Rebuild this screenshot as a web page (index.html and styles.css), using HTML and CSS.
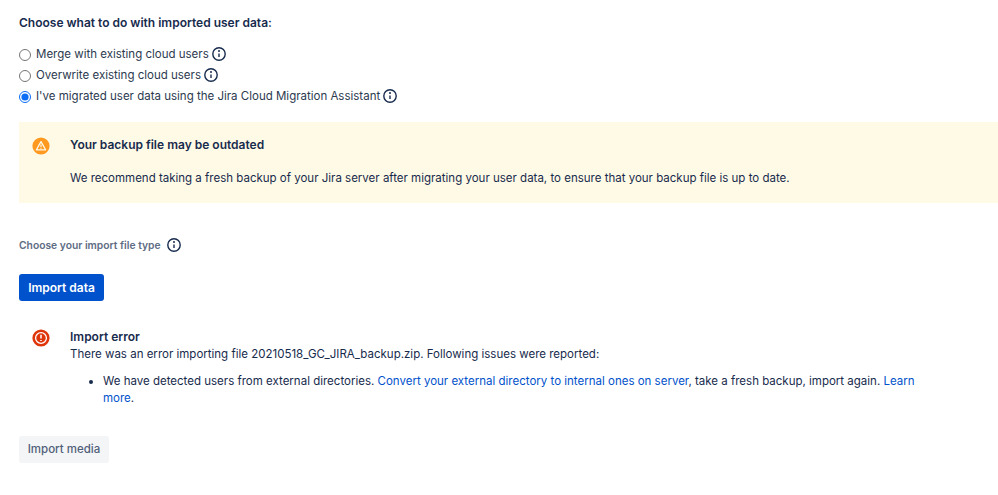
FILE: index.html
```html
<!DOCTYPE html>
<html lang="en">
<head>
<meta charset="utf-8">
<title>Import</title>
<link rel="stylesheet" href="styles.css">
</head>
<body>
<main class="page">
  <h2 class="heading">Choose what to do with imported user data:</h2>
  <div class="options">
    <label class="option"><input type="radio" name="mode"><span>Merge with existing cloud users</span>
      <svg class="info" viewBox="0 0 16 16"><circle cx="8" cy="8" r="6.2"/><path d="M8 7.4v3.6"/><circle class="dot" cx="8" cy="5" r="1"/></svg></label>
    <label class="option"><input type="radio" name="mode"><span>Overwrite existing cloud users</span>
      <svg class="info" viewBox="0 0 16 16"><circle cx="8" cy="8" r="6.2"/><path d="M8 7.4v3.6"/><circle class="dot" cx="8" cy="5" r="1"/></svg></label>
    <label class="option"><input type="radio" name="mode" checked><span>I've migrated user data using the Jira Cloud Migration Assistant</span>
      <svg class="info" viewBox="0 0 16 16"><circle cx="8" cy="8" r="6.2"/><path d="M8 7.4v3.6"/><circle class="dot" cx="8" cy="5" r="1"/></svg></label>
  </div>
  <section class="notice">
    <svg class="status" viewBox="0 0 18 18"><circle cx="9" cy="9" r="8.6" fill="#ff991f"/><path d="M9 4.6 13.6 12.8H4.4Z" fill="none" stroke="#fffaeb" stroke-width="1.3" stroke-linejoin="round"/><path d="M9 7.6v2.6M9 11v.7" stroke="#fffaeb" stroke-width="1.2"/></svg>
    <div>
      <h3 class="title">Your backup file may be outdated</h3>
      <p class="notice-text">We recommend taking a fresh backup of your Jira server after migrating your user data, to ensure that your backup file is up to date.</p>
    </div>
  </section>
  <div class="file-type"><span>Choose your import file type</span>
    <svg class="info" viewBox="0 0 16 16"><circle cx="8" cy="8" r="6.2"/><path d="M8 7.4v3.6"/><circle class="dot" cx="8" cy="5" r="1"/></svg></div>
  <button class="btn primary" type="button">Import data</button>
  <section class="error">
    <svg class="status" viewBox="0 0 18 18"><circle cx="9" cy="9" r="8.6" fill="#de350b"/><circle cx="9" cy="9" r="5.4" fill="none" stroke="#fff" stroke-width="1.3"/><path d="M9 5.8v3.8M9 10.9v1" stroke="#fff" stroke-width="1.5"/></svg>
    <div class="error-body">
      <h3 class="title">Import error</h3>
      <p class="error-text">There was an error importing file 20210518_GC_JIRA_backup.zip. Following issues were reported:</p>
      <ul class="issues">
        <li>We have detected users from external directories. <a href="#">Convert your external directory to internal ones on server</a>, take a fresh backup, import again. <a href="#">Learn more</a>.</li>
      </ul>
    </div>
  </section>
  <button class="btn subtle" type="button">Import media</button>
</main>
</body>
</html>
```
FILE: styles.css
```css
* { box-sizing: border-box; }
html, body { margin: 0; background: #fff; }
body {
  font-family: Inter, "Liberation Sans", sans-serif;
  font-size: 11.5px;
  line-height: 17px;
  color: #172b4d;
  overflow: hidden;
}
.page { width: 998px; height: 495px; padding: 14px 0 0 19px; }
.heading { margin: 0; font-size: 12px; line-height: 17px; font-weight: 600; color: #172b4d; }
.options { margin-top: 15px; display: flex; flex-direction: column; gap: 4px; }
.option { display: flex; align-items: center; height: 17px; color: #2c3a4f; }
.option input { width: 12px; height: 12px; margin: 0 5px 0 0; accent-color: #0b6ef5; }
.info { width: 16px; height: 16px; margin: -2px 0 0 2px; flex: none; fill: none; stroke: #172b4d; stroke-width: 1.4; }
.info .dot { fill: #172b4d; stroke: none; }
.notice {
  display: flex;
  gap: 13px;
  margin-top: 17px;
  height: 81px;
  padding: 14px 0 0 13px;
  background: #fffae6;
}
.status { width: 18px; height: 18px; margin-top: 1px; flex: none; }
.notice > div { padding-left: 7px; }
.title { margin: 0; font-size: 12px; line-height: 17px; font-weight: 600; color: #172b4d; }
.notice-text { margin: 17px 0 0; }
.file-type { display: flex; align-items: center; gap: 3px; margin-top: 34px; font-size: 10.3px; font-weight: 600; color: #5e6c84; height: 17px; }
.file-type .info { margin-left: 2px; }
.btn { display: block; border: 0; border-radius: 3px; font: inherit; font-weight: 500; }
.primary { margin-top: 20px; width: 85px; height: 27px; background: #0052cc; color: #fff; font-size: 12px; font-weight: 600; }
.error { display: flex; gap: 13px; margin-top: 27px; padding-left: 13px; }
.error-body { padding-left: 7px; width: 856px; }
.error-text { margin: 1px 0 0; }
.issues { margin: 10px 0 0; padding-left: 33px; line-height: 16.5px; }
.issues a { color: #0052cc; text-decoration: none; }
.subtle { margin-top: 30px; width: 90px; height: 27px; background: #f4f5f7; color: #505f79; }
```
